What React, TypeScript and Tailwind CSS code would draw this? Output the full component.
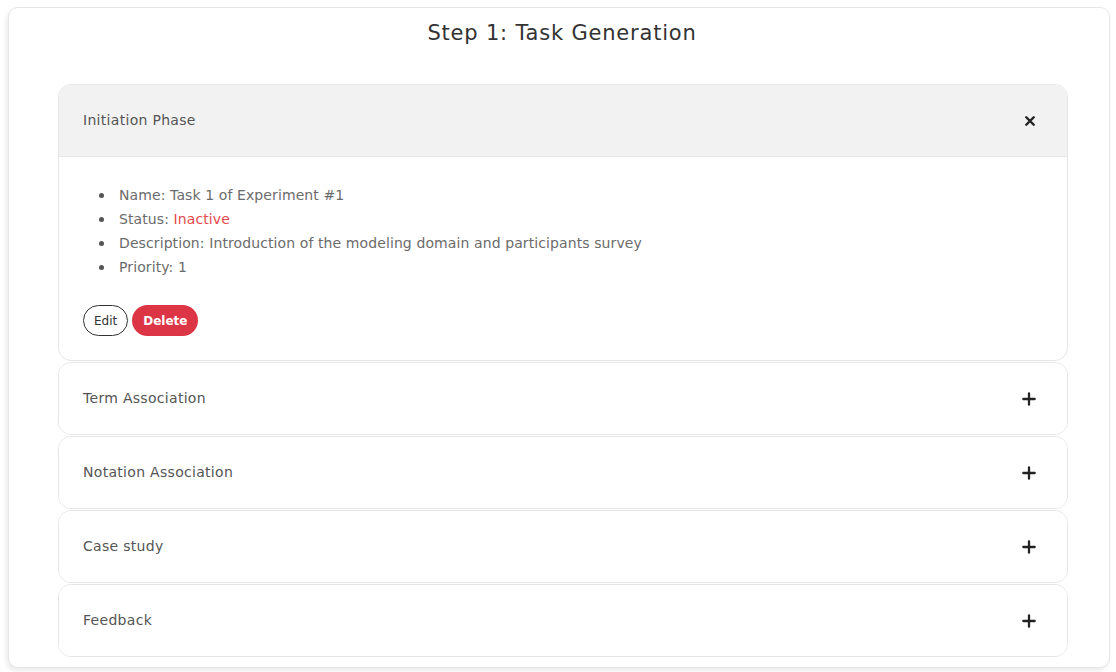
import { useState } from "react";

type Section = {
  title: string;
  open?: boolean;
};

const sections: Section[] = [
  { title: "Initiation Phase", open: true },
  { title: "Term Association" },
  { title: "Notation Association" },
  { title: "Case study" },
  { title: "Feedback" },
];

function CloseIcon() {
  return (
    <svg className="w-[12px] h-[12px] text-[#222]" viewBox="0 0 16 16" fill="none" stroke="currentColor">
      <path strokeLinecap="round" strokeWidth={3.2} d="M3 3l10 10M13 3L3 13" />
    </svg>
  );
}

function PlusIcon() {
  return (
    <svg className="w-[14px] h-[14px] text-[#222]" viewBox="0 0 16 16" fill="none" stroke="currentColor">
      <path strokeLinecap="round" strokeWidth={2.6} d="M8 1.5v13M1.5 8h13" />
    </svg>
  );
}

function Bullet({ children }: { children: React.ReactNode }) {
  return (
    <li className="flex items-center">
      <span className="ml-[16px] mr-[15px] w-[5px] h-[5px] rounded-full bg-[#555] shrink-0" />
      <span>{children}</span>
    </li>
  );
}

function TaskDetails() {
  return (
    <div className="px-6 pt-[26px] pb-[24px]">
      <ul className="text-[14px] tracking-[0.1px] leading-6 text-[#6b6b6b]">
        <Bullet>Name: Task 1 of Experiment #1</Bullet>
        <Bullet>
          Status: <span className="text-[#e5484d]">Inactive</span>
        </Bullet>
        <Bullet>Description: Introduction of the modeling domain and participants survey</Bullet>
        <Bullet>Priority: 1</Bullet>
      </ul>
      <div className="mt-[26px] flex items-center gap-[4px]">
        <button className="h-[31px] px-[10px] rounded-full border border-[#333] text-[12px] text-[#333] bg-white">
          Edit
        </button>
        <button className="h-[31px] px-[11px] rounded-full bg-[#dc3545] text-[12px] font-semibold text-white">
          Delete
        </button>
      </div>
    </div>
  );
}

function AccordionItem({ section, first }: { section: Section; first: boolean }) {
  const [open, setOpen] = useState(!!section.open);
  return (
    <div
      className={`border border-[#e6e6e6] rounded-[13px] overflow-hidden bg-white ${first ? "" : "mt-[1px]"}`}
    >
      <button
        onClick={() => setOpen(!open)}
        className={`w-full flex items-center justify-between pl-6 pr-[31px] text-left text-[14px] tracking-[0.3px] text-[#555] ${
          open ? "h-[72px] bg-[#f2f2f2] border-b border-[#e6e6e6]" : "h-[71px] bg-white"
        }`}
      >
        <span>{section.title}</span>
        {open ? <CloseIcon /> : <PlusIcon />}
      </button>
      {open && <TaskDetails />}
    </div>
  );
}

export default function App() {
  return (
    <div
      className="w-[1116px] h-[672px] bg-white pt-[7px] pl-[8px] pr-[6px]"
      style={{ fontFamily: "'DejaVu Sans', 'Open Sans', sans-serif" }}
    >
      <div className="h-[661px] border border-[#e6e6e6] rounded-[10px] shadow-[-2px_3px_4px_rgba(0,0,0,0.08)] bg-white">
        <h2 className="pt-[11px] pl-[6px] text-center text-[21px] tracking-[0.8px] text-[#333] leading-[28px]">
          Step 1: Task Generation
        </h2>
        <div className="mt-[37px] ml-[49px] mr-[41px]">
          {sections.map((s, i) => (
            <AccordionItem key={s.title} section={s} first={i === 0} />
          ))}
        </div>
      </div>
    </div>
  );
}
